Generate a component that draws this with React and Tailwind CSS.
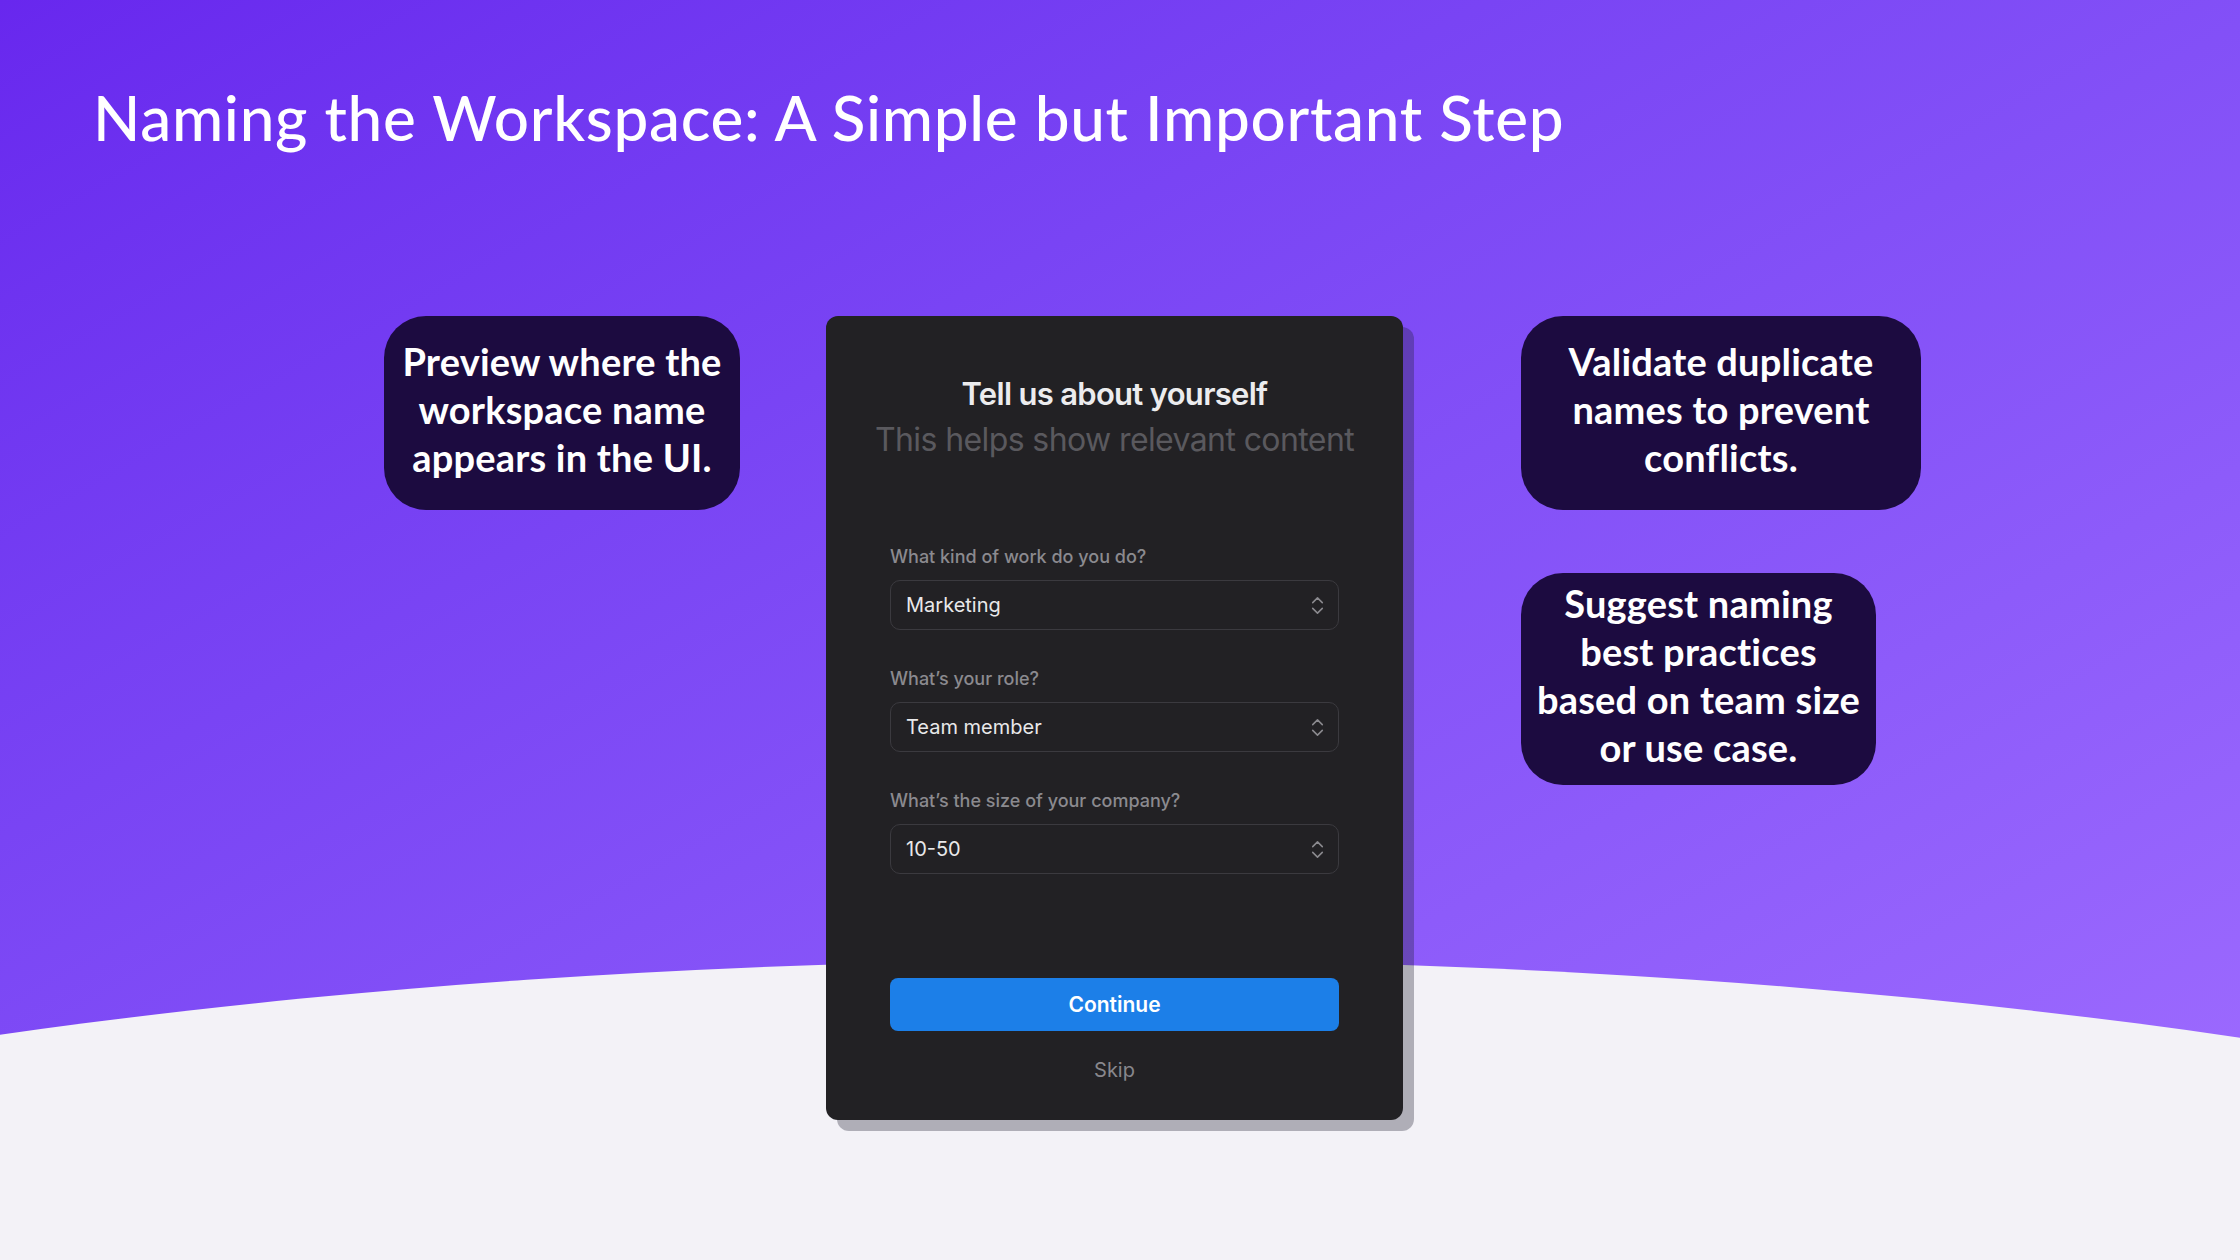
import React from 'react';
import { ChevronsUpDown } from 'lucide-react';

const Callout = ({ width, height, lines }) => (
  <div
    className={`flex flex-col items-center justify-center rounded-[42px] bg-[#1c0b40] pb-[8px] text-center text-[38px] font-bold leading-[48px] tracking-[0.2px] text-white ${width} ${height}`}
    style={{ fontFamily: 'Lato, "Noto Sans", sans-serif' }}
  >
    {lines.map((l) => (
      <span key={l} className="whitespace-nowrap">{l}</span>
    ))}
  </div>
);

const Select = ({ label, value, top }) => (
  <div className={top}>
    <p className="text-[18px] font-medium leading-[24px] text-[#8b8a8f]">{label}</p>
    <div className="mt-[11px] flex h-[50px] items-center justify-between rounded-[10px] border border-[#3b3a3f] pl-[15px] pr-[9px]">
      <span className="text-[20px] text-[#e9e9ea]">{value}</span>
      <ChevronsUpDown size={23} strokeWidth={1.6} className="text-[#8b8a8f]" />
    </div>
  </div>
);

export default function App() {
  return (
    <div className="relative h-[1260px] w-full overflow-hidden bg-linear-to-br from-[#6827ee] to-[#a06dff]">
      {/* white curved floor */}
      <div className="absolute left-[-1290px] top-[960px] h-[1320px] w-[4800px] rounded-[50%] bg-[#f3f2f7]" />

      <div className="relative">
        <h1
          className="pl-[93px] pt-[80px] text-[62px] font-medium leading-[74px] tracking-[0.7px] text-white"
          style={{ fontFamily: 'Lato, "Noto Sans", sans-serif' }}
        >
          Naming the Workspace: A Simple but Important Step
        </h1>

        <div className="mt-[162px] flex items-start pl-[384px]">
          <Callout width="w-[356px]" height="h-[194px]" lines={['Preview where the', 'workspace name', 'appears in the UI.']} />

          <div
            className="ml-[86px] flex h-[804px] w-[577px] flex-col rounded-[12px] bg-[#222124] px-[64px] shadow-[11px_11px_0_rgba(30,30,50,0.32)]"
            style={{ fontFamily: 'Inter, "Noto Sans", sans-serif' }}
          >
            <h2 className="mt-[58px] text-center text-[31px] font-semibold leading-[40px] tracking-[-0.7px] text-[#ececee]">
              Tell us about yourself
            </h2>
            <p className="-mx-[40px] mt-[6px] whitespace-nowrap text-center text-[32px] leading-[40px] tracking-[-0.6px] text-[#5a595e]">
              This helps show relevant content
            </p>

            <Select top="mt-[85px]" label="What kind of work do you do?" value="Marketing" />
            <Select top="mt-[37px]" label="What’s your role?" value="Team member" />
            <Select top="mt-[37px]" label="What’s the size of your company?" value="10-50" />

            <button className="mt-[104px] h-[53px] w-full rounded-[8px] bg-[#1c7fe8] text-[21px] font-semibold text-white">
              Continue
            </button>
            <p className="mt-[25px] text-center text-[20px] leading-[28px] text-[#88878c]">Skip</p>
          </div>

          <div className="ml-[118px] flex flex-col gap-[63px]">
            <Callout width="w-[400px]" height="h-[194px]" lines={['Validate duplicate', 'names to prevent', 'conflicts.']} />
            <Callout width="w-[355px]" height="h-[212px]" lines={['Suggest naming', 'best practices', 'based on team size', 'or use case.']} />
          </div>
        </div>
      </div>
    </div>
  );
}
